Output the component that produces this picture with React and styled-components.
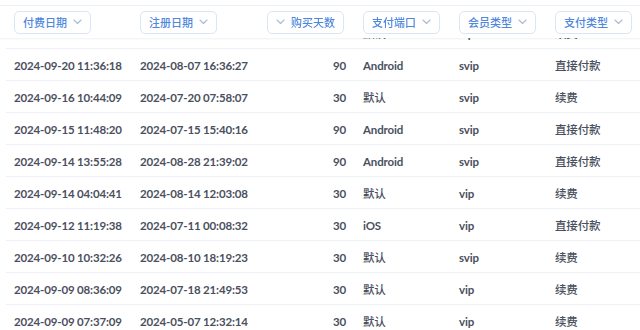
import React, { useLayoutEffect, useRef } from 'react';
import styled, { createGlobalStyle } from 'styled-components';

const GlobalStyle = createGlobalStyle`
  html, body {
    margin: 0;
    padding: 0;
    background: #ffffff;
  }
  body {
    font-family: Lato, 'Noto Sans CJK SC', sans-serif;
  }
`;

const COLS = '126px 127px 96px 96px 96px 1fr';

const Frame = styled.div`
  width: 640px;
  height: 330px;
  padding-top: 5px;
  box-sizing: border-box;
  overflow: hidden;
`;

const Scroller = styled.div`
  height: 325px;
  overflow-y: auto;
  scrollbar-width: none;
  &::-webkit-scrollbar {
    display: none;
  }
`;

const Head = styled.div`
  position: sticky;
  top: 0;
  z-index: 2;
  height: 33px;
  box-sizing: border-box;
  display: grid;
  grid-template-columns: ${COLS};
  align-items: center;
  padding-left: 14px;
  background: #ffffff;
  border-top: 1px solid #edf0f4;
  box-shadow: 0 1px 2px rgba(30, 50, 90, 0.07);
`;

const HeadCell = styled.div`
  display: flex;
  justify-content: ${(p) => (p.$right ? 'flex-end' : 'flex-start')};
  padding-right: ${(p) => (p.$right ? '19px' : '0')};
`;

const FilterButton = styled.button`
  display: flex;
  align-items: center;
  flex-direction: ${(p) => (p.$right ? 'row-reverse' : 'row')};
  justify-content: space-between;
  width: 77px;
  height: 23px;
  box-sizing: border-box;
  padding: 0 8px;
  margin: 0;
  background: #ffffff;
  border: 1px solid #dbe5f6;
  border-radius: 5px;
  color: #4f88dd;
  font-family: 'Noto Sans CJK SC', sans-serif;
  font-size: 11px;
  font-weight: 500;
  white-space: nowrap;
  cursor: pointer;
  span {
    white-space: nowrap;
    line-height: 1;
  }
  svg {
    flex: none;
  }
`;

const Row = styled.div`
  height: 32px;
  box-sizing: border-box;
  margin-left: 6px;
  padding-left: 8px;
  display: grid;
  grid-template-columns: ${COLS};
  align-items: center;
  border-bottom: 1px solid #f0f1f4;
`;

const Cell = styled.div`
  font-family: Lato, 'Noto Sans CJK SC', sans-serif;
  font-size: 11.5px;
  letter-spacing: -0.15px;
  font-weight: ${(p) => (p.$cjk ? 500 : 700)};
  color: #4b505e;
  white-space: nowrap;
  text-align: ${(p) => (p.$right ? 'right' : 'left')};
  padding-right: ${(p) => (p.$right ? '17px' : '0')};
  padding-top: 1px;
`;

const Chevron = () => (
  <svg width="9" height="6" viewBox="0 0 9 6">
    <polyline
      points="1,1 4.5,4.5 8,1"
      fill="none"
      stroke="#a9bbd6"
      strokeWidth="1.1"
      strokeLinecap="round"
      strokeLinejoin="round"
    />
  </svg>
);

const columns = [
  { label: '付费日期' },
  { label: '注册日期' },
  { label: '购买天数', right: true },
  { label: '支付端口' },
  { label: '会员类型' },
  { label: '支付类型' },
];

const rows = [
  ['2024-09-21 09:12:44', '2024-08-19 10:25:31', '30', '默认', 'vip', '续费'],
  ['2024-09-20 11:36:18', '2024-08-07 16:36:27', '90', 'Android', 'svip', '直接付款'],
  ['2024-09-16 10:44:09', '2024-07-20 07:58:07', '30', '默认', 'svip', '续费'],
  ['2024-09-15 11:48:20', '2024-07-15 15:40:16', '90', 'Android', 'svip', '直接付款'],
  ['2024-09-14 13:55:28', '2024-08-28 21:39:02', '90', 'Android', 'svip', '直接付款'],
  ['2024-09-14 04:04:41', '2024-08-14 12:03:08', '30', '默认', 'vip', '续费'],
  ['2024-09-12 11:19:38', '2024-07-11 00:08:32', '30', 'iOS', 'vip', '直接付款'],
  ['2024-09-10 10:32:26', '2024-08-10 18:19:23', '30', '默认', 'svip', '续费'],
  ['2024-09-09 08:36:09', '2024-07-18 21:49:53', '30', '默认', 'vip', '续费'],
  ['2024-09-09 07:37:09', '2024-05-07 12:32:14', '30', '默认', 'vip', '续费'],
  ['2024-09-08 22:14:50', '2024-06-30 19:02:11', '30', '默认', 'vip', '续费'],
  ['2024-09-08 18:05:37', '2024-08-02 08:47:26', '90', 'Android', 'svip', '直接付款'],
];

const hasCjk = (s) => /[\u4e00-\u9fff]/.test(s);

export default function App() {
  const scrollRef = useRef(null);

  // the table is scrolled a little, one row sits under the header
  useLayoutEffect(() => {
    if (scrollRef.current) scrollRef.current.scrollTop = 21;
  }, []);

  return (
    <Frame>
      <GlobalStyle />
      <Scroller ref={scrollRef}>
        <Head>
          {columns.map((c) => (
            <HeadCell key={c.label} $right={c.right}>
              <FilterButton $right={c.right}>
                <span>{c.label}</span>
                <Chevron />
              </FilterButton>
            </HeadCell>
          ))}
        </Head>
        {rows.map((r, i) => (
          <Row key={i}>
            {r.map((v, j) => (
              <Cell key={j} $right={columns[j].right} $cjk={hasCjk(v)}>
                {v}
              </Cell>
            ))}
          </Row>
        ))}
      </Scroller>
    </Frame>
  );
}
